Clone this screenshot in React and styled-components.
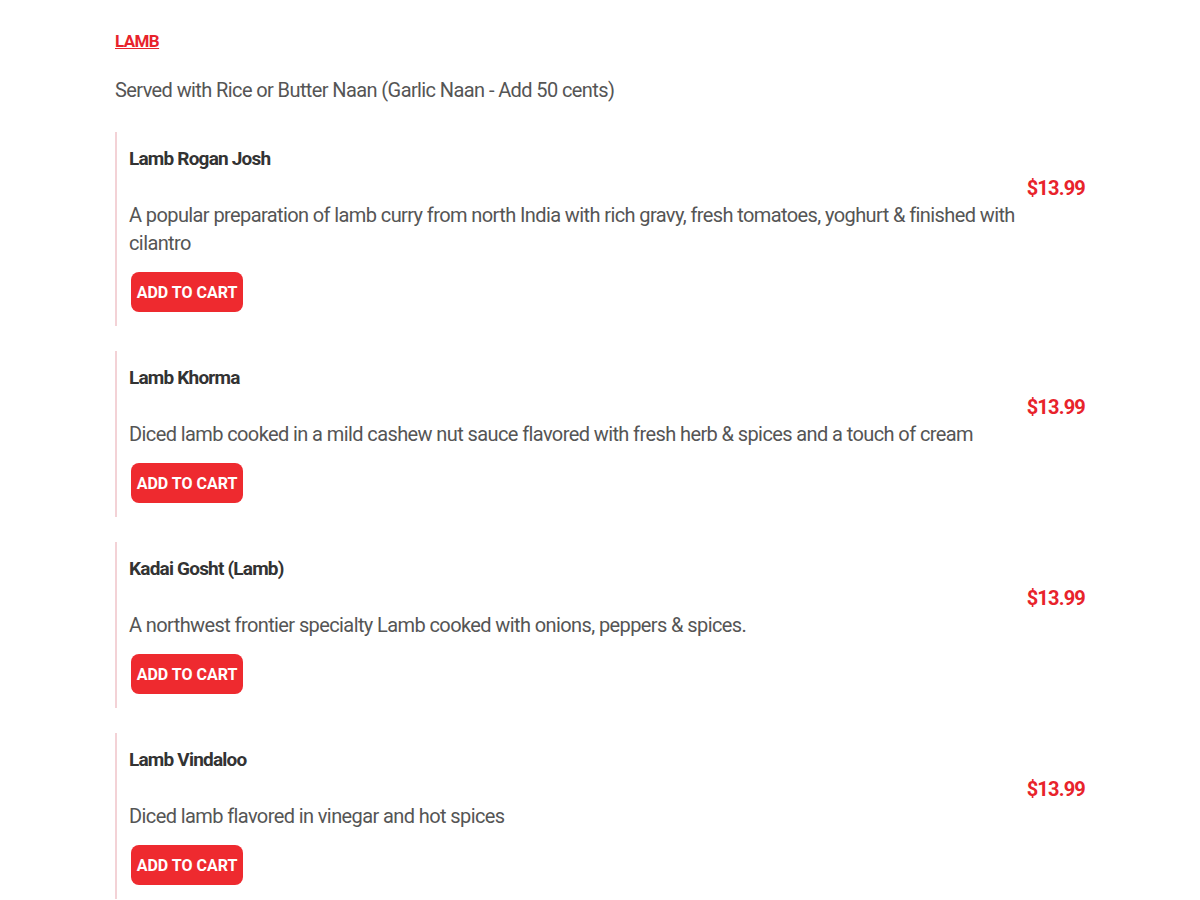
import styled, { createGlobalStyle } from 'styled-components'

const GlobalStyle = createGlobalStyle`
  body {
    margin: 0;
    background: #fff;
    font-family: Roboto, 'DejaVu Sans', sans-serif;
  }
`

const items = [
  {
    name: 'Lamb Rogan Josh',
    desc: 'A popular preparation of lamb curry from north India with rich gravy, fresh tomatoes, yoghurt & finished with cilantro',
    price: '$13.99',
  },
  {
    name: 'Lamb Khorma',
    desc: 'Diced lamb cooked in a mild cashew nut sauce flavored with fresh herb & spices and a touch of cream',
    price: '$13.99',
  },
  {
    name: 'Kadai Gosht (Lamb)',
    desc: 'A northwest frontier specialty Lamb cooked with onions, peppers & spices.',
    price: '$13.99',
  },
  {
    name: 'Lamb Vindaloo',
    desc: 'Diced lamb flavored in vinegar and hot spices',
    price: '$13.99',
  },
]

function App() {
  return (
    <>
      <GlobalStyle />
      <Page>
        <Category href='#'>LAMB</Category>
        <Note>Served with Rice or Butter Naan (Garlic Naan - Add 50 cents)</Note>
        <List>
          {items.map((item) => (
            <Item key={item.name}>
              <Info>
                <Name>{item.name}</Name>
                <Desc>{item.desc}</Desc>
                <CartButton>ADD TO CART</CartButton>
              </Info>
              <Price>{item.price}</Price>
            </Item>
          ))}
        </List>
      </Page>
    </>
  )
}

export default App

const Page = styled.div`
  width: 970px;
  padding: 28px 0 0 115px;
`

const Category = styled.a`
  display: inline-block;
  color: #e8232b;
  font-size: 17px;
  font-weight: bold;
  line-height: 26px;
  letter-spacing: -0.6px;
  text-decoration: underline;
`

const Note = styled.p`
  margin: 22px 0 0;
  color: #555;
  font-size: 20px;
  line-height: 28px;
  letter-spacing: -0.6px;
`

const List = styled.div`
  display: flex;
  flex-direction: column;
  gap: 25px;
  margin-top: 28px;
`

const Item = styled.div`
  display: flex;
  align-items: flex-start;
  border-left: 2px solid #f3d2d6;
  padding: 13px 0 14px 12px;
`

const Info = styled.div`
  flex: 1;
  display: flex;
  flex-direction: column;
  align-items: flex-start;
`

const Name = styled.h3`
  margin: 0 0 28px;
  color: #333;
  font-size: 19px;
  font-weight: bold;
  line-height: 28px;
  letter-spacing: -0.8px;
`

const Desc = styled.p`
  margin: 0 -10px 15px 0;
  color: #555;
  font-size: 20px;
  line-height: 28px;
  letter-spacing: -0.6px;
`

const CartButton = styled.button`
  margin-left: 2px;
  width: 112px;
  height: 40px;
  padding: 0;
  border: none;
  border-radius: 8px;
  background: #ee2a2f;
  color: #fff;
  font-family: inherit;
  font-size: 16px;
  font-weight: bold;
  white-space: nowrap;
  cursor: pointer;
`

const Price = styled.span`
  flex-shrink: 0;
  margin-top: 29px;
  color: #e8232b;
  font-size: 20px;
  font-weight: bold;
  line-height: 28px;
  letter-spacing: -0.8px;
`
